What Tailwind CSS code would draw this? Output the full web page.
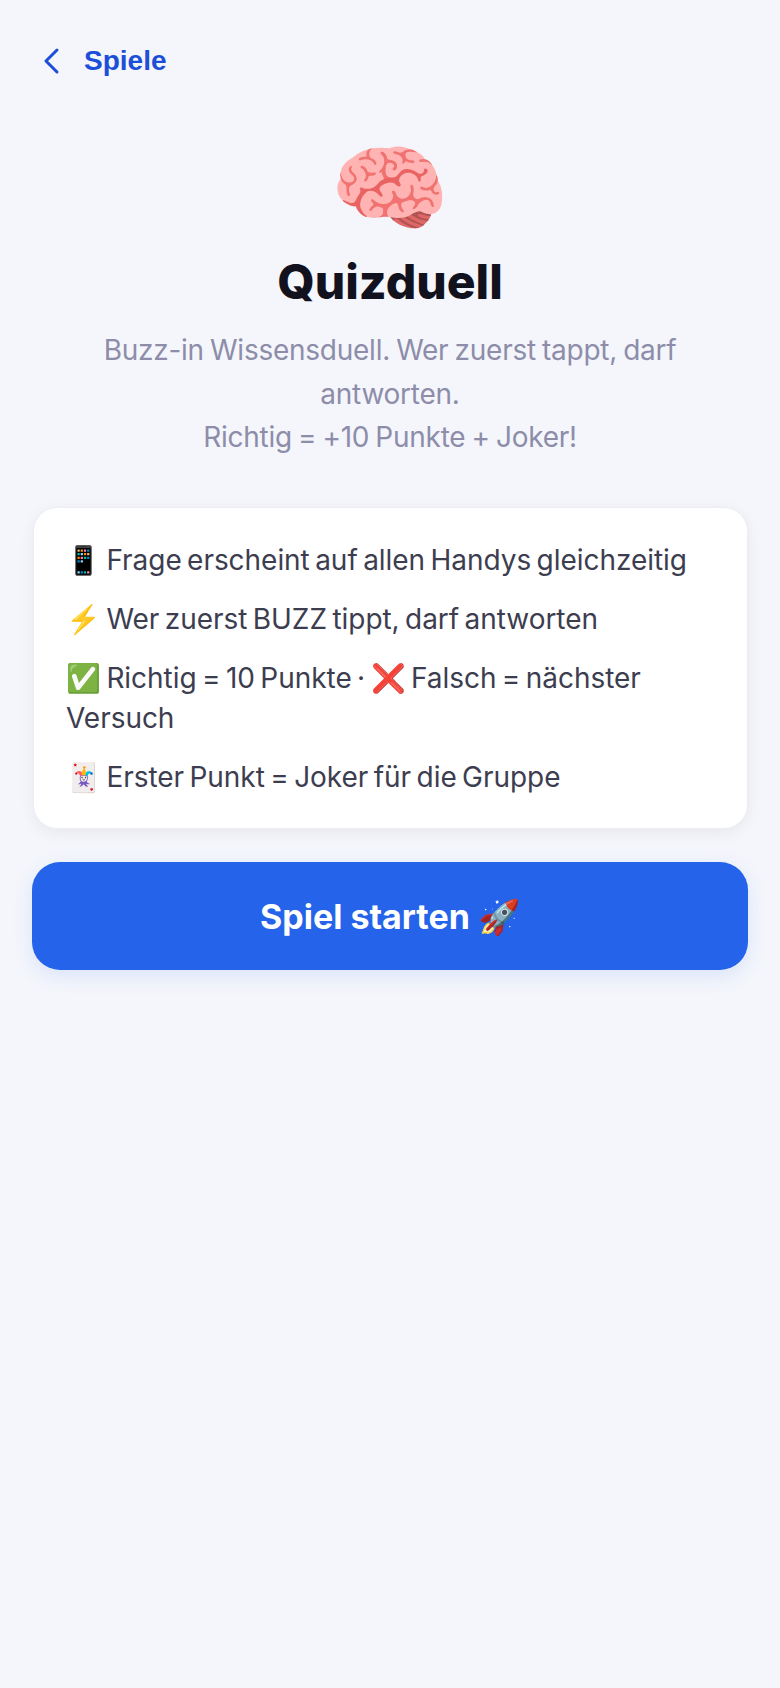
<!DOCTYPE html>
<html lang="en">
<head>
<meta charset="UTF-8">
<script src="https://cdn.jsdelivr.net/npm/@tailwindcss/browser@4"></script>
<title>Quizduell</title>
</head>
<body class="bg-[#f4f6fb] min-h-[1688px] font-['Inter',sans-serif]">
<div class="px-8 pt-[41px]">
	<div class="flex items-center gap-[24px] ml-[10px] text-[#1d4ed8] h-[40px]">
		<svg class="w-[18px] h-[28px]" viewBox="0 0 18 28" fill="none" stroke="currentColor" stroke-width="3" stroke-linecap="round" stroke-linejoin="round"><path d="M15 3L4 14l11 11"/></svg>
		<span class="font-['Liberation_Sans'] font-bold text-[28px]">Spiele</span>
	</div>
	<div class="flex flex-col items-center text-center mt-[51px]">
		<div class="text-[96px] leading-[110px]">🧠</div>
		<h1 class="mt-[4px] text-[48px] font-extrabold text-[#12121f]">Quizduell</h1>
		<p class="mt-[10px] text-[28px] text-[#8d8daa] tracking-[-0.25px] [word-spacing:-1.5px]">
			<span class="block leading-[44px]">Buzz-in Wissensduell. Wer zuerst tappt, darf antworten.</span>
			<span class="block leading-[42px]">Richtig = +10 Punkte + Joker!</span>
		</p>
	</div>
	<div class="mt-[49px] ml-[1px] bg-white rounded-[24px] border border-[#ededf3] shadow-[0_4px_16px_rgba(0,0,0,0.06)] pl-[32px] pr-[30px] pt-[32px] pb-[31px] text-[28px] leading-[40px] text-[#3d3d50] tracking-[-0.04px] [word-spacing:-2.4px] flex flex-col gap-[19px]">
		<p>📱 Frage erscheint auf allen Handys gleichzeitig</p>
		<p>⚡ Wer zuerst BUZZ tippt, darf antworten</p>
		<p>✅ Richtig = 10 Punkte · ❌ Falsch = nächster Versuch</p>
		<p>🃏 Erster Punkt = Joker für die Gruppe</p>
	</div>
	<button class="mt-[33px] w-full h-[108px] rounded-[28px] bg-[#2563eb] text-white text-[34px] font-bold shadow-[0_6px_20px_rgba(37,99,235,0.12)]">Spiel starten 🚀</button>
</div>
</body>
</html>
